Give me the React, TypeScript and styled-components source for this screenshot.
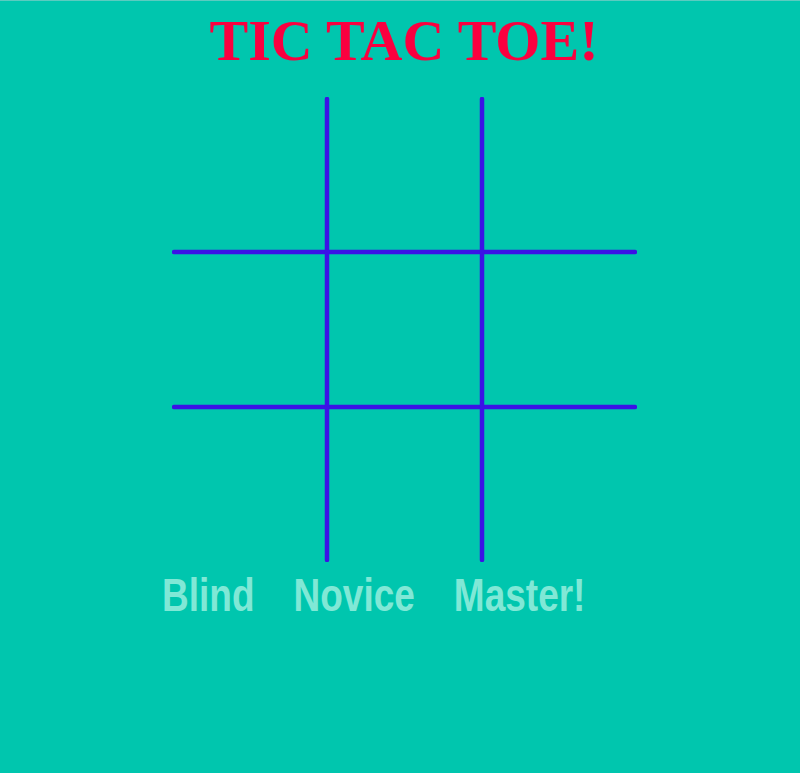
import React, { useState } from "react";
import styled, { createGlobalStyle } from "styled-components";

const GlobalStyle = createGlobalStyle`
  html, body {
    margin: 0;
    padding: 0;
    background: #00c6ae;
  }
`;

const levels = ["Blind", "Novice", "Master!"];

const App: React.FC = () => {
  const [cells, setCells] = useState<string[]>(Array(9).fill(""));
  const [level, setLevel] = useState("Novice");

  const play = (i: number) => {
    if (cells[i]) return;
    const next = [...cells];
    next[i] = "X";
    setCells(next);
  };

  return (
    <>
      <GlobalStyle />
      <Page>
        <Title>TIC TAC TOE!</Title>
        <Board>
          <Lines viewBox="0 0 465 465">
            <line x1="2" y1="155" x2="463" y2="155" />
            <line x1="2" y1="310" x2="463" y2="310" />
            <line x1="155" y1="2" x2="155" y2="463" />
            <line x1="310" y1="2" x2="310" y2="463" />
          </Lines>
          {cells.map((c, i) => (
            <Cell key={i} onClick={() => play(i)}>
              {c}
            </Cell>
          ))}
        </Board>
        <Levels>
          {levels.map((l) => (
            <Level key={l} onClick={() => setLevel(l)} $active={l === level}>
              {l}
            </Level>
          ))}
        </Levels>
      </Page>
    </>
  );
};

const Page = styled.div`
  min-height: 100vh;
  box-sizing: border-box;
  border-top: 1px solid #5ccbc0;
  padding: 11px 0 0 8px;
  display: flex;
  flex-direction: column;
  align-items: center;
`;

const Title = styled.h1`
  margin: 0;
  font-family: "Liberation Serif", "Times New Roman", serif;
  font-weight: bold;
  font-size: 58px;
  line-height: 1;
  color: #fa003f;
`;

const Board = styled.div`
  position: relative;
  margin-top: 27px;
  width: 465px;
  height: 465px;
  display: grid;
  grid-template-columns: repeat(3, 1fr);
  grid-template-rows: repeat(3, 1fr);
`;

const Lines = styled.svg`
  position: absolute;
  inset: 0;
  width: 100%;
  height: 100%;
  pointer-events: none;

  line {
    stroke: #3b12e6;
    stroke-width: 4.5;
    stroke-linecap: round;
  }
`;

const Cell = styled.div`
  display: flex;
  align-items: center;
  justify-content: center;
  font-family: "Liberation Sans", Arial, sans-serif;
  font-size: 90px;
  color: #3b12e6;
  cursor: pointer;
`;

const Levels = styled.div`
  align-self: flex-start;
  margin: 15px 0 0 154px;
  display: flex;
  gap: 39px;
`;

const Level = styled.span<{ $active: boolean }>`
  display: inline-block;
  font-family: "Liberation Sans", Arial, sans-serif;
  font-weight: bold;
  font-size: 37px;
  line-height: 1;
  transform: scaleY(1.25);
  color: #80e8d6;
  cursor: pointer;
`;

export default App;
